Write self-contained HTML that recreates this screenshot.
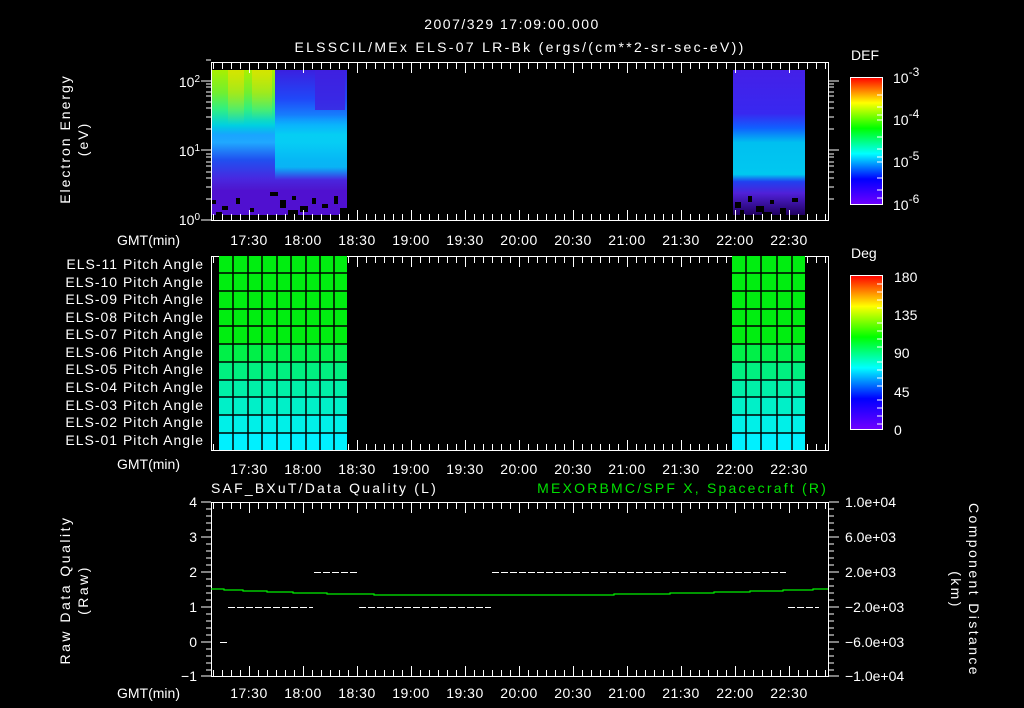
<!DOCTYPE html>
<html><head><meta charset="utf-8"><style>
html,body{margin:0;padding:0;background:#000;}
svg{display:block}
text{font-family:"Liberation Sans",sans-serif;fill:#fff;font-size:14px}
</style></head><body>
<svg width="1024" height="708" viewBox="0 0 1024 708" xmlns="http://www.w3.org/2000/svg">
<defs>
<linearGradient id="lb" x1="0" y1="0" x2="0" y2="1">
<stop offset="0" stop-color="#3a20e0"/><stop offset="0.2" stop-color="#2048f8"/>
<stop offset="0.38" stop-color="#10a0ff"/><stop offset="0.5" stop-color="#20a8ff"/>
<stop offset="0.62" stop-color="#2050f0"/><stop offset="0.75" stop-color="#4828e0"/>
<stop offset="0.85" stop-color="#5010c8"/><stop offset="1" stop-color="#300090"/>
</linearGradient>
<linearGradient id="ly" x1="0" y1="0" x2="0" y2="1">
<stop offset="0" stop-color="#a8f000"/><stop offset="0.35" stop-color="#70f030"/>
<stop offset="0.6" stop-color="#30f080"/><stop offset="0.85" stop-color="#00d0e0"/>
<stop offset="1" stop-color="#00d0e0" stop-opacity="0"/>
</linearGradient>
<linearGradient id="yv" x1="0" y1="0" x2="0" y2="1">
<stop offset="0" stop-color="#e8e000" stop-opacity="0.7"/><stop offset="1" stop-color="#e8e000" stop-opacity="0"/>
</linearGradient>
<linearGradient id="lc" x1="0" y1="0" x2="0" y2="1">
<stop offset="0" stop-color="#00c8ff" stop-opacity="0"/><stop offset="0.3" stop-color="#00d8f0"/>
<stop offset="0.8" stop-color="#00d0f8"/><stop offset="1" stop-color="#00c8ff" stop-opacity="0"/>
</linearGradient>
<linearGradient id="rb" x1="0" y1="0" x2="0" y2="1">
<stop offset="0" stop-color="#4420e8"/><stop offset="0.3" stop-color="#3828f0"/>
<stop offset="0.4" stop-color="#1060ff"/><stop offset="0.5" stop-color="#00c0f0"/>
<stop offset="0.72" stop-color="#00c8f0"/><stop offset="0.77" stop-color="#2040f0"/>
<stop offset="0.85" stop-color="#5020d8"/><stop offset="1" stop-color="#200060"/>
</linearGradient>
<linearGradient id="cb" x1="0" y1="1" x2="0" y2="0">
<stop offset="0" stop-color="#7000ff"/><stop offset="0.2" stop-color="#0000ff"/>
<stop offset="0.4" stop-color="#00ffff"/><stop offset="0.6" stop-color="#00ff00"/>
<stop offset="0.8" stop-color="#ffff00"/><stop offset="1" stop-color="#ff0000"/>
</linearGradient>
</defs>

<!-- titles -->
<text x="512" y="29" text-anchor="middle" font-size="17" letter-spacing="1.5">2007/329 17:09:00.000</text>
<text x="520" y="52" text-anchor="middle" font-size="16" letter-spacing="2.3">ELSSCIL/MEx ELS-07 LR-Bk  (ergs/(cm**2-sr-sec-eV))</text>

<!-- panel 1 data -->
<rect x="211" y="70" width="136" height="145" fill="url(#lb)"/>
<rect x="211" y="70" width="64" height="65" fill="url(#ly)"/>
<rect x="228" y="70" width="16" height="55" fill="url(#yv)"/>
<rect x="252" y="70" width="20" height="50" fill="url(#yv)"/>
<rect x="275" y="115" width="72" height="65" fill="url(#lc)" opacity="0.8"/>
<rect x="315" y="70" width="30" height="40" fill="#4020e0" opacity="0.8"/>
<rect x="211" y="190" width="136" height="25" fill="#5010d0"/>
<g fill="#000">
<rect x="212" y="200" width="4" height="4"/><rect x="222" y="206" width="6" height="4"/><rect x="236" y="198" width="4" height="6"/>
<rect x="270" y="192" width="8" height="4"/><rect x="280" y="200" width="6" height="8"/><rect x="292" y="196" width="4" height="4"/>
<rect x="300" y="206" width="8" height="6"/><rect x="312" y="198" width="4" height="6"/><rect x="322" y="204" width="6" height="4"/>
<rect x="334" y="196" width="4" height="8"/><rect x="340" y="208" width="7" height="7"/><rect x="288" y="210" width="10" height="5"/>
<rect x="216" y="212" width="6" height="3"/><rect x="250" y="208" width="4" height="4"/>
</g>
<rect x="733" y="70" width="72" height="145" fill="url(#rb)"/>
<g fill="#000">
<rect x="735" y="202" width="6" height="6"/><rect x="748" y="196" width="4" height="6"/><rect x="756" y="206" width="8" height="6"/>
<rect x="770" y="200" width="4" height="4"/><rect x="780" y="208" width="6" height="7"/><rect x="792" y="198" width="6" height="4"/>
<rect x="740" y="210" width="4" height="5"/><rect x="762" y="212" width="10" height="3"/>
</g>

<!-- axis boxes and ticks -->
<g stroke="#fff" fill="none">
<rect x="211.5" y="62.5" width="617" height="158"/>
<rect x="211.5" y="256.5" width="617" height="194"/>
<rect x="211.5" y="502.5" width="617" height="174"/>
</g>
<g stroke="#fff" stroke-dasharray="1 8" stroke-dashoffset="7">
<line x1="211" y1="66" x2="828" y2="66" stroke-width="6"/><line x1="211" y1="217" x2="828" y2="217" stroke-width="6"/>
<line x1="211" y1="260" x2="828" y2="260" stroke-width="6"/><line x1="211" y1="447" x2="828" y2="447" stroke-width="6"/>
<line x1="211" y1="506" x2="828" y2="506" stroke-width="6"/><line x1="211" y1="673" x2="828" y2="673" stroke-width="6"/>
</g>
<g stroke="#fff" stroke-dasharray="1 53" stroke-dashoffset="16">
<line x1="211" y1="68" x2="828" y2="68" stroke-width="10"/><line x1="211" y1="215" x2="828" y2="215" stroke-width="10"/>
<line x1="211" y1="262" x2="828" y2="262" stroke-width="10"/><line x1="211" y1="445" x2="828" y2="445" stroke-width="10"/>
<line x1="211" y1="508" x2="828" y2="508" stroke-width="10"/><line x1="211" y1="671" x2="828" y2="671" stroke-width="10"/>
</g>
<!-- log ticks panel1 -->
<g stroke="#fff">
<path d="M201 220H211M201 150H211M201 81H211M206 199H211M206 187H211M206 178H211M206 172H211M206 166H211M206 162H211M206 157H211M206 154H211M206 129H211M206 117H211M206 108H211M206 102H211M206 96H211M206 92H211M206 87H211M206 84H211M206 60H211"/>
<path d="M829 150H839M829 81H839M829 199H834M829 187H834M829 178H834M829 172H834M829 166H834M829 162H834M829 157H834M829 154H834M829 129H834M829 117H834M829 108H834M829 102H834M829 96H834M829 92H834M829 87H834M829 84H834"/>
</g>
<text x="200" y="87" text-anchor="end" font-size="14">10<tspan dy="-5" font-size="10">2</tspan></text>
<text x="200" y="156" text-anchor="end" font-size="14">10<tspan dy="-5" font-size="10">1</tspan></text>
<text x="200" y="225" text-anchor="end" font-size="14">10<tspan dy="-5" font-size="10">0</tspan></text>
<text transform="translate(70 139) rotate(-90)" text-anchor="middle" font-size="15" letter-spacing="2">Electron Energy</text>
<text transform="translate(88 139) rotate(-90)" text-anchor="middle" font-size="15" letter-spacing="2">(eV)</text>

<!-- time labels -->
<g font-size="15" text-anchor="middle" letter-spacing="0.5">
<text x="249" y="245">17:30</text><text x="303" y="245">18:00</text><text x="357" y="245">18:30</text><text x="411" y="245">19:00</text><text x="465" y="245">19:30</text><text x="519" y="245">20:00</text><text x="573" y="245">20:30</text><text x="627" y="245">21:00</text><text x="681" y="245">21:30</text><text x="735" y="245">22:00</text><text x="789" y="245">22:30</text>
<text x="249" y="474">17:30</text><text x="303" y="474">18:00</text><text x="357" y="474">18:30</text><text x="411" y="474">19:00</text><text x="465" y="474">19:30</text><text x="519" y="474">20:00</text><text x="573" y="474">20:30</text><text x="627" y="474">21:00</text><text x="681" y="474">21:30</text><text x="735" y="474">22:00</text><text x="789" y="474">22:30</text>
<text x="249" y="698">17:30</text><text x="303" y="698">18:00</text><text x="357" y="698">18:30</text><text x="411" y="698">19:00</text><text x="465" y="698">19:30</text><text x="519" y="698">20:00</text><text x="573" y="698">20:30</text><text x="627" y="698">21:00</text><text x="681" y="698">21:30</text><text x="735" y="698">22:00</text><text x="789" y="698">22:30</text>
</g>
<text x="117" y="245" font-size="13">GMT(min)</text>
<text x="117" y="469" font-size="13">GMT(min)</text>
<text x="117" y="698" font-size="13">GMT(min)</text>

<!-- panel 2 cells -->
<g>
<rect x="219" y="256" width="128" height="194" fill="#00ee10"/>
<rect x="219" y="344" width="128" height="18" fill="#00f048"/>
<rect x="219" y="362" width="128" height="18" fill="#00f080"/>
<rect x="219" y="380" width="128" height="17" fill="#00f0a8"/>
<rect x="219" y="397" width="128" height="18" fill="#00f0c8"/>
<rect x="219" y="415" width="128" height="18" fill="#00f0e8"/>
<rect x="219" y="433" width="128" height="17" fill="#00f0ff"/>
<rect x="732" y="256" width="73" height="194" fill="#00ee10"/>
<rect x="732" y="344" width="73" height="18" fill="#00f048"/>
<rect x="732" y="362" width="73" height="18" fill="#00f080"/>
<rect x="732" y="380" width="73" height="17" fill="#00f0a8"/>
<rect x="732" y="397" width="73" height="18" fill="#00f0c8"/>
<rect x="732" y="415" width="73" height="18" fill="#00f0e8"/>
<rect x="732" y="433" width="73" height="17" fill="#00f0ff"/>
</g>
<g stroke="#000" stroke-width="1.5">
<path d="M219 273H347M219 291H347M219 309H347M219 326H347M219 344H347M219 362H347M219 380H347M219 397H347M219 415H347M219 433H347"/>
<path d="M732 273H805M732 291H805M732 309H805M732 326H805M732 344H805M732 362H805M732 380H805M732 397H805M732 415H805M732 433H805"/>
<path d="M233 256V450M248 256V450M262 256V450M277 256V450M291 256V450M306 256V450M320 256V450M334 256V450"/>
<path d="M746 256V450M761 256V450M777 256V450M792 256V450"/>
</g>
<g font-size="12.5" text-anchor="end" letter-spacing="1">
<text x="204" y="269">ELS-11 Pitch Angle</text><text x="204" y="287">ELS-10 Pitch Angle</text><text x="204" y="304">ELS-09 Pitch Angle</text><text x="204" y="322">ELS-08 Pitch Angle</text><text x="204" y="339">ELS-07 Pitch Angle</text><text x="204" y="357">ELS-06 Pitch Angle</text><text x="204" y="374">ELS-05 Pitch Angle</text><text x="204" y="392">ELS-04 Pitch Angle</text><text x="204" y="410">ELS-03 Pitch Angle</text><text x="204" y="427">ELS-02 Pitch Angle</text><text x="204" y="445">ELS-01 Pitch Angle</text>
</g>

<!-- colorbars -->
<text x="851" y="60" font-size="16">DEF</text>
<rect x="850.5" y="77.5" width="32" height="127" fill="url(#cb)" stroke="#fff"/>
<g stroke="#fff"><path d="M877 95H882M877 107H882M877 115H882M877 120H882M877 137H882M877 149H882M877 157H882M877 162H882M877 178H882M877 190H882M877 198H882"/></g>
<text x="893" y="83" font-size="17">10<tspan dy="-7" font-size="12">-3</tspan></text>
<text x="893" y="125" font-size="17">10<tspan dy="-7" font-size="12">-4</tspan></text>
<text x="893" y="167" font-size="17">10<tspan dy="-7" font-size="12">-5</tspan></text>
<text x="893" y="210" font-size="17">10<tspan dy="-7" font-size="12">-6</tspan></text>
<text x="851" y="258" font-size="16">Deg</text>
<rect x="850.5" y="275.5" width="32" height="154" fill="url(#cb)" stroke="#fff"/>
<g stroke="#fff"><path d="M877 284H882M877 292H882M877 300H882M877 308H882M877 323H882M877 331H882M877 339H882M877 347H882M877 362H882M877 370H882M877 378H882M877 386H882M877 400H882M877 408H882M877 416H882M877 424H882"/></g>
<g font-size="17"><text x="894" y="282">180</text><text x="894" y="320">135</text><text x="894" y="358">90</text><text x="894" y="397">45</text><text x="894" y="435">0</text></g>

<!-- panel 3 -->
<text x="211" y="493" font-size="16" letter-spacing="2.2">SAF_BXuT/Data Quality (L)</text>
<text x="828" y="493" font-size="16" text-anchor="end" letter-spacing="2.2" style="fill:#00e000">MEXORBMC/SPF X, Spacecraft (R)</text>
<g stroke="#fff">
<path d="M201 502H211M201 537H211M201 572H211M201 607H211M201 642H211M201 676H211"/>
<path d="M206 509H211M206 516H211M206 523H211M206 530H211M206 544H211M206 551H211M206 558H211M206 565H211M206 579H211M206 586H211M206 593H211M206 600H211M206 614H211M206 621H211M206 628H211M206 635H211M206 649H211M206 656H211M206 663H211M206 670H211"/>
<path d="M829 502H839M829 537H839M829 572H839M829 607H839M829 642H839M829 676H839"/>
<path d="M829 509H834M829 516H834M829 523H834M829 530H834M829 544H834M829 551H834M829 558H834M829 565H834M829 579H834M829 586H834M829 593H834M829 600H834M829 614H834M829 621H834M829 628H834M829 635H834M829 649H834M829 656H834M829 663H834M829 670H834"/>
</g>
<g font-size="14" text-anchor="end">
<text x="197" y="507">4</text><text x="197" y="542">3</text><text x="197" y="577">2</text><text x="197" y="612">1</text><text x="197" y="647">0</text><text x="197" y="681">−1</text>
</g>
<g font-size="13">
<text x="845" y="507">1.0e+04</text><text x="845" y="542">6.0e+03</text><text x="845" y="577">2.0e+03</text><text x="845" y="612">−2.0e+03</text><text x="845" y="647">−6.0e+03</text><text x="845" y="681">−1.0e+04</text>
</g>
<text transform="translate(70 590) rotate(-90)" text-anchor="middle" font-size="15" letter-spacing="2.5">Raw Data Quality</text>
<text transform="translate(88 590) rotate(-90)" text-anchor="middle" font-size="15" letter-spacing="2.5">(Raw)</text>
<text transform="translate(969 590) rotate(90)" text-anchor="middle" font-size="15" letter-spacing="2.4">Component Distance</text>
<text transform="translate(951 590) rotate(90)" text-anchor="middle" font-size="15" letter-spacing="2.4">(km)</text>
<g stroke="#fff" stroke-dasharray="7 2">
<line x1="228" y1="607.5" x2="313" y2="607.5"/><line x1="359" y1="607.5" x2="491" y2="607.5"/><line x1="788" y1="607.5" x2="819" y2="607.5"/>
<line x1="314" y1="572.5" x2="357" y2="572.5"/><line x1="492" y1="572.5" x2="786" y2="572.5"/>
<line x1="220" y1="642.5" x2="227" y2="642.5"/>
</g>
<polyline fill="none" stroke="#00f000" stroke-width="1.2" points="211,589 224,589 224,590 243,590 243,591 267,591 267,592 293,592 293,593 327,593 327,594 374,594 374,595 614,595 614,594 670,594 670,593 714,593 714,592 750,592 750,591 783,591 783,590 813,590 813,589 828,589"/>
</svg>
</body></html>
